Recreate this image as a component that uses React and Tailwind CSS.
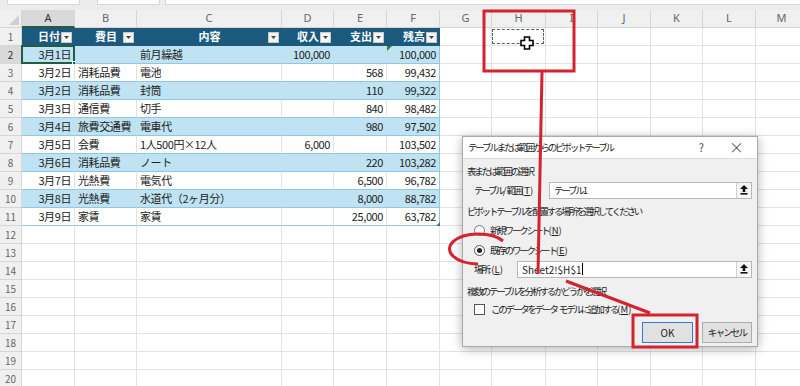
import React from "react";

const cols = [
  { k: "A", w: "w-[53px]" },
  { k: "B", w: "w-[62px]" },
  { k: "C", w: "w-[145px]" },
  { k: "D", w: "w-[52px]" },
  { k: "E", w: "w-[53px]" },
  { k: "F", w: "w-[53px]" },
  { k: "G", w: "w-[52px]" },
  { k: "H", w: "w-[54px]" },
  { k: "I", w: "w-[52px]" },
  { k: "J", w: "w-[53px]" },
  { k: "K", w: "w-[52px]" },
  { k: "L", w: "w-[53px]" },
  { k: "M", w: "w-[52px]" },
];

const head = [
  { t: "日付", align: "justify-end pr-[15px]" },
  { t: "費目", align: "justify-center" },
  { t: "内容", align: "justify-center" },
  { t: "収入", align: "justify-end pr-[15px]" },
  { t: "支出", align: "justify-end pr-[15px]" },
  { t: "残高", align: "justify-end pr-[15px]" },
];

const data = [
  ["3月1日", "", "前月繰越", "100,000", "", "100,000"],
  ["3月2日", "消耗品費", "電池", "", "568", "99,432"],
  ["3月2日", "消耗品費", "封筒", "", "110", "99,322"],
  ["3月3日", "通信費", "切手", "", "840", "98,482"],
  ["3月4日", "旅費交通費", "電車代", "", "980", "97,502"],
  ["3月5日", "会費", "1人500円×12人", "6,000", "", "103,502"],
  ["3月6日", "消耗品費", "ノート", "", "220", "103,282"],
  ["3月7日", "光熱費", "電気代", "", "6,500", "96,782"],
  ["3月8日", "光熱費", "水道代（2ヶ月分）", "", "8,000", "88,782"],
  ["3月9日", "家賃", "家賃", "", "25,000", "63,782"],
];

const alignCls = ["justify-end", "justify-start", "justify-start", "justify-end", "justify-end", "justify-end"];

const jp = { fontFamily: '"Noto Sans CJK JP", "Noto Sans", sans-serif' };

function DropBtn() {
  return (
    <span className="absolute right-[3px] top-[4px] w-[11px] h-[11px] bg-[#f4f4f4] border border-[#c8c8c8] flex items-center justify-center">
      <svg width="5" height="3" viewBox="0 0 5 3"><path d="M0 0h5L2.5 3z" fill="#444" /></svg>
    </span>
  );
}

// half-width bits keep normal spacing inside the condensed dialog text
function Hw({ children }) {
  return <span className="tracking-normal">{children}</span>;
}

function Row({ r }) {
  const inTable = r >= 1 && r <= 11;
  const blue = inTable && r % 2 === 0;
  return (
    <div className="flex h-[18px]">
      <div className={`w-[22px] shrink-0 flex items-center justify-center text-[10px] border-r border-b border-[#d6d6d6] ${r === 2 ? "bg-[#d9d9d9] text-[#333]" : "bg-[#f0f0f0] text-[#666]"}`}>
        {r}
      </div>
      {cols.map((c, i) => {
        const tableCol = inTable && i < 6;
        if (tableCol && r === 1) {
          return (
            <div key={c.k} className={`${c.w} shrink-0 relative flex items-center ${head[i].align} bg-[#1b5a7c] text-white font-bold text-[11px] border-b border-[#1b5a7c]`}>
              {head[i].t}
              <DropBtn />
            </div>
          );
        }
        if (tableCol) {
          return (
            <div
              key={c.k}
              className={`${c.w} shrink-0 relative flex items-center ${alignCls[i]} px-[3px] text-[11px] tracking-[-0.4px] text-[#222] whitespace-nowrap border-b border-[#93c6df] ${i === 5 ? "border-r border-r-[#93c6df]" : blue ? "border-r border-r-[#bfe3f3]" : "border-r border-r-[#e2e2e2]"} ${blue ? "bg-[#bfe3f3]" : "bg-white"}`}
            >
              {data[r - 2][i]}
              {r === 2 && i === 5 && (
                <span className="absolute left-0 top-0 w-0 h-0 border-t-[5px] border-r-[5px] border-t-[#1f8a3c] border-r-transparent" />
              )}
              {r === 11 && i === 5 && (
                <span className="absolute right-[-1px] bottom-[-1px] w-0 h-0 border-b-[4px] border-l-[4px] border-b-[#3d6f8c] border-l-transparent" />
              )}
              {r === 2 && i === 0 && (
                <span className="absolute inset-[-1px] border-2 border-[#1f5e45]">
                  <span className="absolute right-[-4px] bottom-[-4px] w-[5px] h-[5px] bg-[#1f5e45] border border-white" />
                </span>
              )}
            </div>
          );
        }
        return (
          <div key={c.k} className={`${c.w} shrink-0 relative border-r border-b border-[#e2e2e2] bg-white`}>
            {r === 1 && c.k === "H" && (
              <span className="absolute left-0 top-[1px] right-[1px] bottom-[1px] border border-dashed border-[#4d6a5a]" />
            )}
          </div>
        );
      })}
    </div>
  );
}

function UpIcon() {
  return (
    <svg width="8" height="10" viewBox="0 0 8 10">
      <path d="M4 0L8 4H5.3V7H2.7V4H0z" fill="#111" />
      <rect x="0.5" y="8" width="7" height="1.6" fill="#111" />
    </svg>
  );
}

function Dialog() {
  return (
    <div
      className="absolute left-[462px] top-[136px] w-[296px] h-[211px] bg-[#f0f0f0] border border-[#a9a9a9] shadow-[0_2px_10px_rgba(0,0,0,0.3)] text-[9.5px] tracking-[-2.2px] text-[#222] flex flex-col whitespace-nowrap"
      style={jp}
    >
      <div className="h-[21px] bg-white flex items-center pl-[5px] shrink-0">
        <span className="flex-1">テーブルまたは範囲からのピボットテーブル</span>
        <span className="text-[11px] text-[#444] tracking-normal mr-[25px]">?</span>
        <span className="text-[15px] text-[#333] font-light tracking-normal mr-[13px]">×</span>
      </div>
      <div className="h-[4px] border-t border-[#dcdcdc]" />
      <div className="h-[18px] flex items-center pl-[4px]">表または範囲の選択</div>
      <div className="h-[19px] flex items-center pl-[11px] pr-[5px] pt-[1px]">
        <span className="w-[75px]">テーブル<Hw>/</Hw>範囲<Hw>(<u>T</u>)</Hw></span>
        <div className="flex-1 h-[17px] bg-white border border-[#b8b8b8] flex items-center pl-[4px]">
          <span className="flex-1">テーブル<Hw>1</Hw></span>
          <span className="w-[15px] h-[15px] border-l border-[#cfcfcf] bg-[#f7f7f7] flex items-center justify-center">
            <UpIcon />
          </span>
        </div>
      </div>
      <div className="h-[3px]" />
      <div className="h-[18px] flex items-center pl-[4px]">ピボットテーブルを配置する場所を選択してください</div>
      <div className="h-[20px] flex items-center pl-[11px] gap-[5px]">
        <span className="w-[11px] h-[11px] rounded-full border border-[#777] bg-white" />
        <span>新規ワークシート<Hw>(<u>N</u>)</Hw></span>
      </div>
      <div className="h-[20px] flex items-center pl-[11px] gap-[5px]">
        <span className="w-[11px] h-[11px] rounded-full border border-[#555] bg-white flex items-center justify-center">
          <span className="w-[5px] h-[5px] rounded-full bg-[#222]" />
        </span>
        <span>既存のワークシート<Hw>(<u>E</u>)</Hw></span>
      </div>
      <div className="h-[18px] flex items-center pl-[11px] pr-[5px]">
        <span className="w-[43px]">場所<Hw>:(<u>L</u>)</Hw></span>
        <div className="flex-1 h-[17px] bg-white border border-[#b8b8b8] flex items-center pl-[4px]">
          <span className="flex-1 flex items-center tracking-normal text-[10px]">
            Sheet2!$H$1
            <span className="w-px h-[12px] bg-black ml-[1px]" />
          </span>
          <span className="w-[15px] h-[15px] border-l border-[#cfcfcf] bg-[#f7f7f7] flex items-center justify-center">
            <UpIcon />
          </span>
        </div>
      </div>
      <div className="h-[4px]" />
      <div className="h-[18px] flex items-center pl-[4px]">複数のテーブルを分析するかどうかを選択</div>
      <div className="h-[18px] flex items-center pl-[11px] gap-[6px]">
        <span className="w-[11px] h-[11px] border border-[#555] bg-white" />
        <span>このデータをデータ<Hw> </Hw>モデルに追加する<Hw>(<u>M</u>)</Hw></span>
      </div>
      <div className="h-[4px]" />
      <div className="h-[21px] flex justify-end gap-[9px] pr-[5px]">
        <button className="w-[51px] h-[21px] bg-[#e1e1e1] border border-[#2e7bcf] text-[10px] tracking-normal text-[#222]">OK</button>
        <button className="w-[50px] h-[21px] bg-[#e1e1e1] border border-[#adadad] text-[9.5px] tracking-[-1.8px] text-[#222]">キャンセル</button>
      </div>
    </div>
  );
}

export default function App() {
  return (
    <div className="relative w-[800px] h-[386px] overflow-hidden bg-white" style={jp}>
      <div className="h-[10px] bg-[#ececec] relative">
        <div className="absolute left-[7px] top-0 w-[73px] h-[5px] bg-white border-b border-x border-[#d6d6d6]" />
        <div className="absolute left-[97px] top-0 w-[63px] h-[5px] bg-white border-b border-x border-[#d6d6d6]" />
        <div className="absolute left-[165px] top-0 w-[640px] h-[5px] bg-white border-b border-l border-[#d6d6d6]" />
      </div>
      <div className="flex h-[18px]">
        <div className="w-[22px] shrink-0 bg-[#f0f0f0] border-r border-b border-[#d6d6d6] relative">
          <span className="absolute right-[2px] bottom-[2px] w-0 h-0 border-b-[10px] border-l-[10px] border-b-[#d0d0d0] border-l-transparent" />
        </div>
        {cols.map((c) => (
          <div
            key={c.k}
            className={`${c.w} shrink-0 flex items-center justify-center text-[11px] border-r ${c.k === "A" ? "bg-[#d9d9d9] text-[#333] border-b-2 border-b-[#1f5e45]" : "bg-[#f0f0f0] text-[#666] border-b border-b-[#d6d6d6]"} border-r-[#d6d6d6]`}
            style={{ fontFamily: '"Noto Sans", sans-serif' }}
          >
            {c.k}
          </div>
        ))}
      </div>
      {Array.from({ length: 20 }, (_, i) => (
        <Row key={i} r={i + 1} />
      ))}

      <Dialog />

      <svg className="absolute inset-0 pointer-events-none" width="800" height="386" viewBox="0 0 800 386">
        <g fill="none" stroke="#d42330" strokeWidth="3">
          <rect x="484" y="11" width="90" height="60" />
          <path d="M542 72 L538 274" />
          <path d="M503 241 A 29 15 0 1 0 478 264" />
          <path d="M566 281 L650 313" />
          <rect x="633" y="315" width="64" height="32" />
        </g>
        <g transform="translate(527 43)">
          <path d="M-2.5 -6 H2.5 V-2.5 H6 V2.5 H2.5 V6 H-2.5 V2.5 H-6 V-2.5 H-2.5 Z" fill="#fff" stroke="#000" strokeWidth="1.6" />
        </g>
      </svg>
    </div>
  );
}
